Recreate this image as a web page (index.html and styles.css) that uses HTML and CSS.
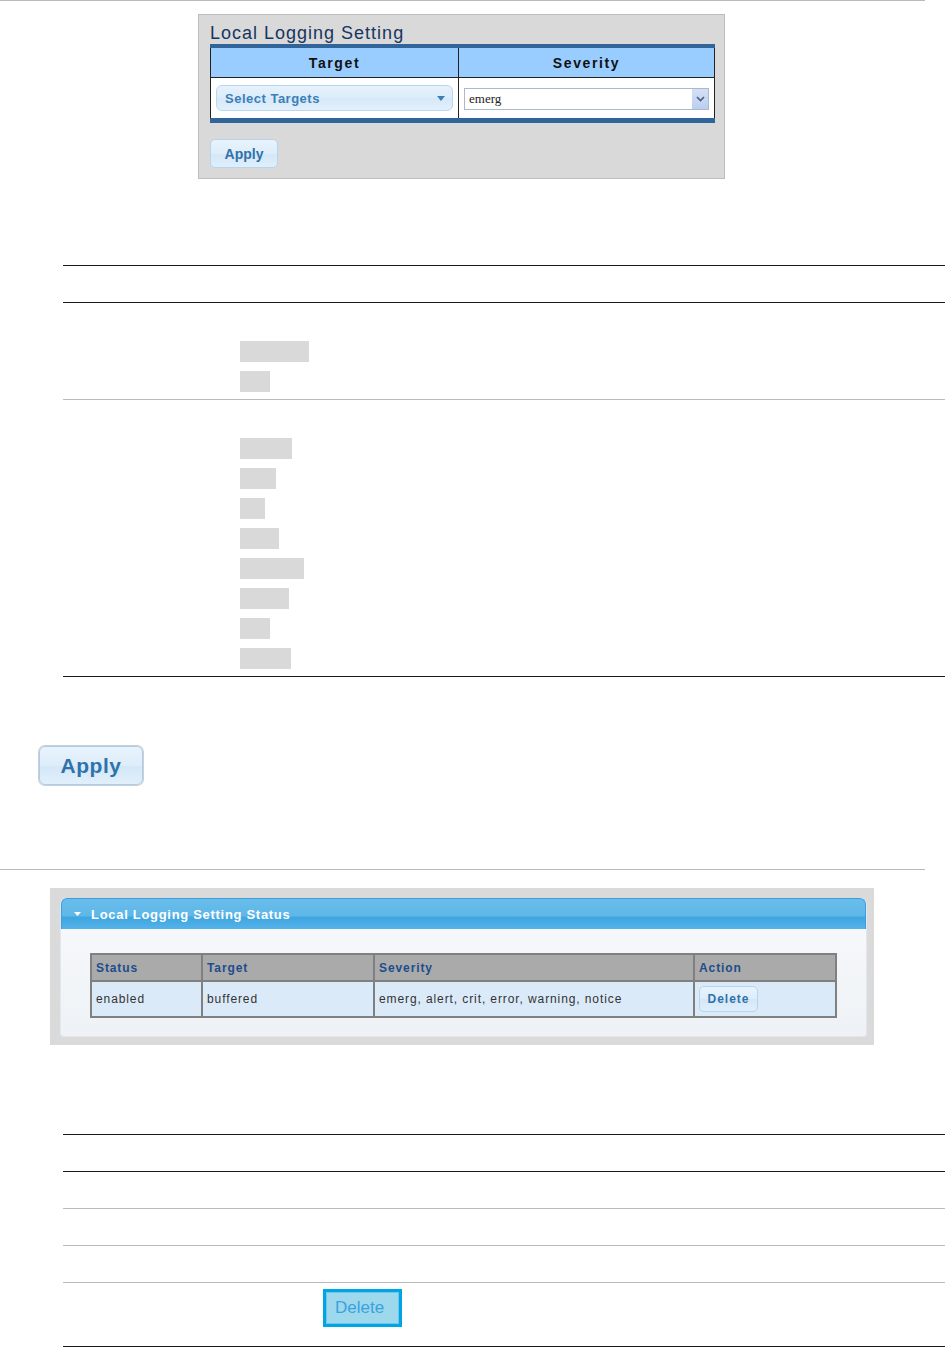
FILE: index.html
```html
<!DOCTYPE html>
<html lang="en">
<head>
    <meta charset="UTF-8">
    <title>Local Logging Setting</title>
    <link rel="stylesheet" href="styles.css">
</head>
<body>
    <div class="rule"></div>

    <div class="setting-panel">
        <div class="panel-title">Local Logging Setting</div>
        <table class="setting-table">
            <thead>
                <tr>
                    <th class="col-target">Target</th>
                    <th>Severity</th>
                </tr>
            </thead>
            <tbody>
                <tr>
                    <td>
                        <div class="multi-select">
                            <span>Select Targets</span>
                            <svg class="multi-arrow" width="8" height="5" viewBox="0 0 8 5"><path d="M0 0h8L4 5z" fill="#3a7fb8"/></svg>
                        </div>
                    </td>
                    <td>
                        <div class="plain-select">
                            <span>emerg</span>
                            <span class="plain-arrow">
                                <svg width="9" height="6" viewBox="0 0 9 6"><path d="M1 1l3.5 3.5L8 1" fill="none" stroke="#4a5f80" stroke-width="1.6"/></svg>
                            </span>
                        </div>
                    </td>
                </tr>
            </tbody>
        </table>
        <button class="btn btn-small">Apply</button>
    </div>

    <!-- field description table -->
    <table class="doc-table doc-fields">
        <tr class="doc-head"><td></td></tr>
        <tr class="doc-row">
            <td>
                <span class="word" style="width:69px"></span>
                <span class="word" style="width:30px"></span>
            </td>
        </tr>
        <tr class="doc-row doc-last">
            <td>
                <span class="word" style="width:52px"></span>
                <span class="word" style="width:36px"></span>
                <span class="word" style="width:25px"></span>
                <span class="word" style="width:39px"></span>
                <span class="word" style="width:64px"></span>
                <span class="word" style="width:49px"></span>
                <span class="word" style="width:30px"></span>
                <span class="word" style="width:51px"></span>
            </td>
        </tr>
    </table>

    <button class="btn btn-big">Apply</button>

    <div class="rule rule-mid"></div>

    <div class="status-outer">
        <div class="status-panel">
            <div class="status-head">
                <svg class="head-arrow" width="7" height="4" viewBox="0 0 7 4"><path d="M0 0h7L3.5 4z" fill="#fff"/></svg>
                <span>Local Logging Setting Status</span>
            </div>
            <table class="status-table">
                <thead>
                    <tr>
                        <th class="c-status">Status</th>
                        <th class="c-target">Target</th>
                        <th class="c-severity">Severity</th>
                        <th>Action</th>
                    </tr>
                </thead>
                <tbody>
                    <tr>
                        <td>enabled</td>
                        <td>buffered</td>
                        <td>emerg, alert, crit, error, warning, notice</td>
                        <td><button class="btn btn-delete">Delete</button></td>
                    </tr>
                </tbody>
            </table>
        </div>
    </div>

    <!-- button description table -->
    <table class="doc-table doc-buttons">
        <tr class="line-dark"><td></td></tr>
        <tr class="line-dark"><td></td></tr>
        <tr><td></td></tr>
        <tr><td></td></tr>
        <tr class="delete-row">
            <td><span class="delete-box">Delete</span></td>
        </tr>
    </table>
</body>
</html>
```

FILE: styles.css
```css
body {
    margin: 0;
    font-family: "Liberation Sans", Arial, sans-serif;
    background-color: #fff;
    width: 945px;
}
.rule {
    width: 925px;
    height: 1px;
    background-color: #bbb;
}
.rule-mid {
    margin-top: 84px;
}

/* top setting panel */
.setting-panel {
    margin: 13px 0 0 198px;
    width: 527px;
    box-sizing: border-box;
    background-color: #d9d9d9;
    border: 1px solid #bdbdbd;
    padding: 7px 10px 10px 11px;
}
.panel-title {
    font-size: 18px;
    line-height: 22px;
    color: #17355f;
    letter-spacing: 1px;
}
.setting-table {
    width: 505px;
    border-collapse: collapse;
    border-top: 4px solid #31659a;
    border-bottom: 5px solid #31659a;
}
.setting-table th {
    height: 29px;
    padding: 0;
    background-color: #99ccff;
    border: 1px solid #222;
    border-top: none;
    font-size: 14px;
    letter-spacing: 1.6px;
    color: #111;
}
.setting-table .col-target {
    width: 247px;
}
.setting-table td {
    height: 40px;
    padding: 0 5px;
    background-color: #fff;
    border: 1px solid #222;
    border-bottom: none;
}
.multi-select {
    height: 26px;
    box-sizing: border-box;
    border: 1px solid #b9d7ef;
    border-radius: 6px;
    background: linear-gradient(#e6f2fc, #dcecfa 50%, #d6e8f8 51%, #e2f0fb);
    display: flex;
    align-items: center;
    justify-content: space-between;
    padding: 0 7px 0 8px;
    font-size: 13px;
    font-weight: bold;
    letter-spacing: 0.5px;
    color: #3a7fb8;
}
.multi-arrow {
    margin-top: 1px;
}
.plain-select {
    height: 22px;
    box-sizing: border-box;
    border: 1px solid #a9bad0;
    background-color: #fff;
    display: flex;
    align-items: center;
    justify-content: space-between;
    padding-left: 4px;
    margin-top: 2px;
    font-family: "Liberation Serif", "Times New Roman", serif;
    font-size: 13px;
    color: #222;
}
.plain-arrow {
    width: 16px;
    height: 20px;
    background: linear-gradient(#d4e0f6, #bccff0);
    display: flex;
    align-items: center;
    justify-content: center;
}

/* buttons */
.btn {
    display: block;
    font-family: "Liberation Sans", Arial, sans-serif;
    font-weight: bold;
    color: #2f72aa;
    border: 1px solid #b5d5ee;
    border-radius: 5px;
    background: linear-gradient(#e8f3fc, #deedfa 50%, #d4e7f7 51%, #e0effb);
    padding: 0;
    cursor: pointer;
}
.btn-small {
    margin-top: 16px;
    width: 68px;
    height: 29px;
    font-size: 14px;
}
.btn-big {
    margin: 69px 0 0 39px;
    width: 104px;
    height: 39px;
    font-size: 21px;
    letter-spacing: 0.5px;
    border-color: #a9cdec;
    border-radius: 6px;
    box-shadow: 0 0 0 1px #cfcfcf;
}
.btn-delete {
    width: 59px;
    height: 26px;
    font-size: 12px;
    letter-spacing: 1px;
}

/* document tables with rules */
.doc-table {
    margin-left: 63px;
    width: 882px;
    border-collapse: collapse;
}
.doc-table td {
    padding: 0;
    border-top: 1px solid #bbb;
}
.doc-table tr:first-child td {
    border-top: 1px solid #1a1a1a;
}
.doc-table tr:last-child td {
    border-bottom: 1px solid #1a1a1a;
}
.doc-fields {
    margin-top: 86px;
}
.doc-head td {
    height: 36px;
}
.doc-row td {
    padding: 38px 0 7px 177px;
}
.doc-fields .doc-head + .doc-row td {
    border-top: 1px solid #1a1a1a;
}
.word {
    display: block;
    height: 21px;
    background-color: #d9d9d9;
    margin-bottom: 9px;
}
.word:last-child {
    margin-bottom: 0;
}

/* status panel */
.status-outer {
    margin: 18px 0 0 50px;
    width: 824px;
    box-sizing: border-box;
    background-color: #dadada;
    padding: 10px 7px 8px 10px;
}
.status-panel {
    height: 139px;
    box-sizing: border-box;
    border: 1px solid #e3e6ea;
    border-top: none;
    border-radius: 6px 6px 4px 4px;
    background: linear-gradient(#f8f9fb, #eef2f6);
}
.status-head {
    height: 31px;
    box-sizing: border-box;
    border: 1px solid #3b9ee0;
    border-bottom: none;
    border-radius: 6px 6px 0 0;
    background: linear-gradient(#68bdea, #5fb7e9 55%, #3ea5e0 62%, #56b3e9);
    display: flex;
    align-items: center;
    padding-left: 12px;
    font-size: 13px;
    font-weight: bold;
    letter-spacing: 0.7px;
    color: #fff;
}
.head-arrow {
    margin: 0 10px 0 0;
}
.status-table {
    margin: 24px 0 0 29px;
    width: 747px;
    border-collapse: collapse;
    border: 2px solid #808080;
    font-size: 12px;
    letter-spacing: 0.9px;
}
.status-table th {
    height: 25px;
    padding: 0 0 0 4px;
    text-align: left;
    background-color: #aaaaaa;
    color: #1d4d8c;
    border: 2px solid #808080;
}
.status-table td {
    height: 34px;
    padding: 0 0 0 4px;
    background-color: #dbeaf8;
    color: #333;
    border: 2px solid #808080;
}
.c-status {
    width: 105px;
}
.c-target {
    width: 166px;
}
.c-severity {
    width: 314px;
}

.doc-buttons {
    margin-top: 89px;
}
.doc-buttons td {
    height: 36px;
}
.doc-buttons .line-dark + .line-dark td {
    border-top: 1px solid #1a1a1a;
}
.doc-buttons .delete-row td {
    height: auto;
    vertical-align: top;
    padding: 6px 0 19px 260px;
}
.delete-box {
    display: block;
    width: 79px;
    height: 38px;
    box-sizing: border-box;
    border: 3px solid #00a5e3;
    box-shadow: inset 0 0 0 1px #6cc8ec;
    background-color: #9dd8ec;
    color: #3aa2de;
    font-size: 17px;
    line-height: 32px;
    padding-left: 9px;
}
```
